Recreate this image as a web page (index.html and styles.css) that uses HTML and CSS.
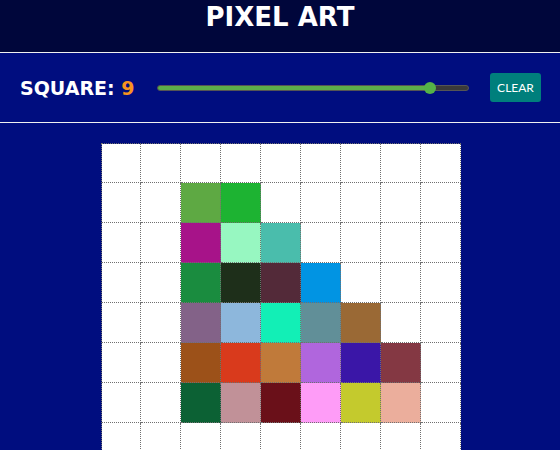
FILE: index.html
```html
<!DOCTYPE html>
<html>
<head>
<meta charset="utf-8">
<title>Pixel Art</title>
<link rel="stylesheet" href="styles.css">
</head>
<body>
<header class="top">
  <h1 class="title">PIXEL ART</h1>
</header>
<section class="controls">
  <div class="label">SQUARE: <span class="value">9</span></div>
  <div class="slider">
    <div class="track">
      <div class="fill" style="width: 89%"></div>
    </div>
    <div class="thumb" style="left: calc(6px + (100% - 12px) * 0.889)"></div>
  </div>
  <button class="clear">CLEAR</button>
</section>
<main class="canvas">
  <div class="grid">
    <div class="cell"></div><div class="cell"></div><div class="cell"></div><div class="cell"></div><div class="cell"></div><div class="cell"></div><div class="cell"></div><div class="cell"></div><div class="cell"></div>
    <div class="cell"></div><div class="cell"></div><div class="cell" style="background:#5ea943"></div><div class="cell" style="background:#1db332"></div><div class="cell"></div><div class="cell"></div><div class="cell"></div><div class="cell"></div><div class="cell"></div>
    <div class="cell"></div><div class="cell"></div><div class="cell" style="background:#a71389"></div><div class="cell" style="background:#97f7c1"></div><div class="cell" style="background:#4abdac"></div><div class="cell"></div><div class="cell"></div><div class="cell"></div><div class="cell"></div>
    <div class="cell"></div><div class="cell"></div><div class="cell" style="background:#1a8c3f"></div><div class="cell" style="background:#1e2f1a"></div><div class="cell" style="background:#532a39"></div><div class="cell" style="background:#0194e3"></div><div class="cell"></div><div class="cell"></div><div class="cell"></div>
    <div class="cell"></div><div class="cell"></div><div class="cell" style="background:#836288"></div><div class="cell" style="background:#8db7dc"></div><div class="cell" style="background:#12efb6"></div><div class="cell" style="background:#618f98"></div><div class="cell" style="background:#9a6935"></div><div class="cell"></div><div class="cell"></div>
    <div class="cell"></div><div class="cell"></div><div class="cell" style="background:#9c5119"></div><div class="cell" style="background:#d93a1c"></div><div class="cell" style="background:#c07a3a"></div><div class="cell" style="background:#b066dd"></div><div class="cell" style="background:#3a16a7"></div><div class="cell" style="background:#843843"></div><div class="cell"></div>
    <div class="cell"></div><div class="cell"></div><div class="cell" style="background:#0c6134"></div><div class="cell" style="background:#c19198"></div><div class="cell" style="background:#6a1019"></div><div class="cell" style="background:#fe9cf7"></div><div class="cell" style="background:#c4ca2d"></div><div class="cell" style="background:#ebae9c"></div><div class="cell"></div>
    <div class="cell"></div><div class="cell"></div><div class="cell"></div><div class="cell"></div><div class="cell"></div><div class="cell"></div><div class="cell"></div><div class="cell"></div><div class="cell"></div>
    <div class="cell"></div><div class="cell"></div><div class="cell"></div><div class="cell"></div><div class="cell"></div><div class="cell"></div><div class="cell"></div><div class="cell"></div><div class="cell"></div>
  </div>
</main>
</body>
</html>
```
FILE: styles.css
```css
html, body {
  margin: 0;
  padding: 0;
}
body {
  background: #000d7f;
  font-family: "DejaVu Sans", Verdana, sans-serif;
  color: #fff;
  overflow: hidden;
}
.top {
  background: #00063b;
  padding: 2px 0 20px;
  border-bottom: 1px solid #f0f0f0;
}
.title {
  margin: 0;
  font-size: 26px;
  line-height: 30px;
  font-weight: bold;
  text-align: center;
}
.controls {
  display: flex;
  align-items: center;
  height: 69px;
  padding: 0 19px 0 20px;
  border-bottom: 1px solid #f0f0f0;
}
.label {
  font-size: 19px;
  font-weight: bold;
  line-height: 22px;
}
.value {
  color: #f7931e;
}
.slider {
  flex: 1;
  position: relative;
  height: 12px;
  margin: 0 21px 0 23px;
  display: flex;
  align-items: center;
}
.track {
  width: 100%;
  height: 6px;
  box-sizing: border-box;
  border-radius: 3px;
  background: #3a3a3a;
  border: 1px solid #555;
  overflow: hidden;
}
.fill {
  height: 100%;
  background: #5cae4a;
}
.thumb {
  position: absolute;
  top: 0;
  width: 12px;
  height: 12px;
  margin-left: -6px;
  border-radius: 50%;
  background: #55b247;
}
.clear {
  width: 51px;
  height: 29px;
  padding: 0;
  border: none;
  border-radius: 3px;
  background: #007f7c;
  color: #fff;
  font-family: "Lato", "Open Sans", sans-serif;
  font-size: 12px;
}
.canvas {
  padding-top: 20px;
}
.grid {
  display: grid;
  grid-template-columns: 39px repeat(8, 40px);
  grid-template-rows: 39px repeat(8, 40px);
  width: 360px;
  box-sizing: border-box;
  margin-left: calc(50% - 179px);
  border-left: 1px dotted #707070;
  border-top: 1px dotted #707070;
}
.cell {
  background: #fff;
  border-right: 1px dotted #707070;
  border-bottom: 1px dotted #707070;
}
```
